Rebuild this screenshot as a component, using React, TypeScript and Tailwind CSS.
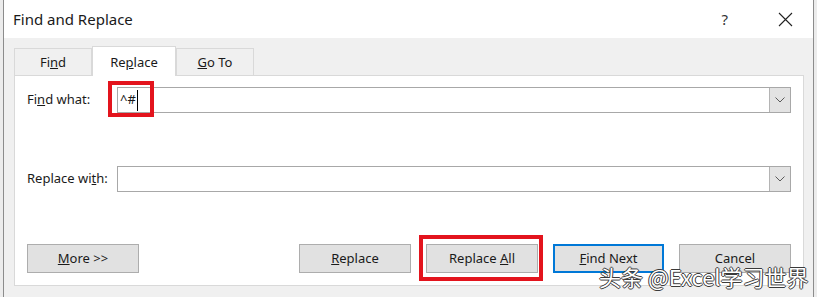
import type { ReactNode } from "react";

const font = { fontFamily: '"Noto Sans", "Open Sans", Arial, sans-serif' };

function Chevron() {
  return (
    <svg width="10" height="6" viewBox="0 0 10 6" fill="none">
      <path d="M0.5 0.5 L5 5 L9.5 0.5" stroke="#5a5a5a" strokeWidth="1" />
    </svg>
  );
}

function Combo({ children }: { children?: ReactNode }) {
  return (
    <div className="flex-1 h-[26px] border border-[#a8a8a8] bg-white flex items-stretch">
      <div className="flex-1 flex items-center pl-[2px] text-[13px] text-[#1a1a1a]">{children}</div>
      <div className="w-[21px] bg-[#e3e3e3] border-l border-[#b4b4b4] flex items-center justify-center">
        <Chevron />
      </div>
    </div>
  );
}

function Btn({ children, primary }: { children: ReactNode; primary?: boolean }) {
  return (
    <div
      className={`h-[29px] flex items-center justify-center pt-px text-[13px] text-[#1a1a1a] bg-[#e1e1e1] ${
        primary ? "w-[111px] border-2 border-[#0078d7]" : "w-[112px] border border-[#adadad]"
      }`}
    >
      <span>{children}</span>
    </div>
  );
}

function Tab({ children, active }: { children: ReactNode; active?: boolean }) {
  return (
    <div
      className={`flex items-center justify-center pt-[2px] text-[13px] text-[#1a1a1a] border border-[#d9d9d9] ${
        active
          ? "w-[84px] h-[30px] bg-white border-b-0 -mb-px relative z-10"
          : "w-[78px] h-[27px] bg-[#f0f0f0] border-b-0"
      }`}
    >
      <span>{children}</span>
    </div>
  );
}

export default function App() {
  return (
    <div className="w-[817px] h-[297px] bg-[#ececec] flex overflow-hidden relative" style={font}>
      <div className="ml-[3px] w-[811px] h-full border-l border-r border-[#8c8c8c] flex flex-col">
        {/* title bar */}
        <div className="h-[38px] bg-white flex items-center pl-[9px] pr-[20px]">
          <span className="text-[15px] text-[#1a1a1a] flex-1">Find and Replace</span>
          <span className="text-[15px] text-[#333] mr-[50px]">?</span>
          <svg width="15" height="15" viewBox="0 0 15 15">
            <path d="M1 1 L14 14 M14 1 L1 14" stroke="#222" strokeWidth="1.1" />
          </svg>
        </div>

        {/* body */}
        <div className="flex-1 bg-[#f0f0f0] pl-[10px] pr-[9px] pt-[9px]">
          <div className="flex items-end h-[28px]">
            <Tab>
              Fi<u>n</u>d
            </Tab>
            <Tab active>
              Re<u>p</u>lace
            </Tab>
            <Tab>
              <u>G</u>o To
            </Tab>
          </div>

          <div className="h-[211px] bg-white border border-[#d9d9d9] px-[12px] pt-[11px] flex flex-col">
            <div className="flex items-center">
              <span className="w-[90px] text-[13px] text-[#1a1a1a]">
                Fi<u>n</u>d what:
              </span>
              <div className="flex-1 flex relative">
                <Combo>
                  <span>^#</span>
                  <span className="w-px h-[21px] bg-black ml-px" />
                </Combo>
                <div className="absolute left-[-9px] top-[-6px] w-[46px] h-[36px] border-4 border-[#e3141d]" />
              </div>
            </div>

            <div className="flex items-center mt-[53px]">
              <span className="w-[90px] text-[13px] text-[#1a1a1a]">
                Replace wi<u>t</u>h:
              </span>
              <Combo />
            </div>

            <div className="flex items-center mt-[52px]">
              <Btn>
                <u>M</u>ore &gt;&gt;
              </Btn>
              <div className="flex-1" />
              <div className="flex items-center gap-[15px]">
                <Btn>
                  <u>R</u>eplace
                </Btn>
                <div className="relative">
                  <Btn>
                    Replace <u>A</u>ll
                  </Btn>
                  <div className="absolute left-[-7px] right-[-5px] top-[-9px] bottom-[-8px] border-4 border-[#e3141d]" />
                </div>
                <Btn primary>
                  <u>F</u>ind Next
                </Btn>
                <Btn>Cancel</Btn>
              </div>
            </div>
          </div>
        </div>
      </div>

      {/* watermark */}
      <div
        className="absolute left-[599px] top-[265px] text-[22px] text-white leading-none whitespace-nowrap [text-shadow:1px_0_#3a3a3a,-1px_0_#3a3a3a,0_1px_#3a3a3a,0_-1px_#3a3a3a]"
        style={{ fontFamily: '"Noto Sans CJK SC", "Noto Sans", sans-serif' }}
      >
        头条 @Excel学习世界
      </div>
    </div>
  );
}
